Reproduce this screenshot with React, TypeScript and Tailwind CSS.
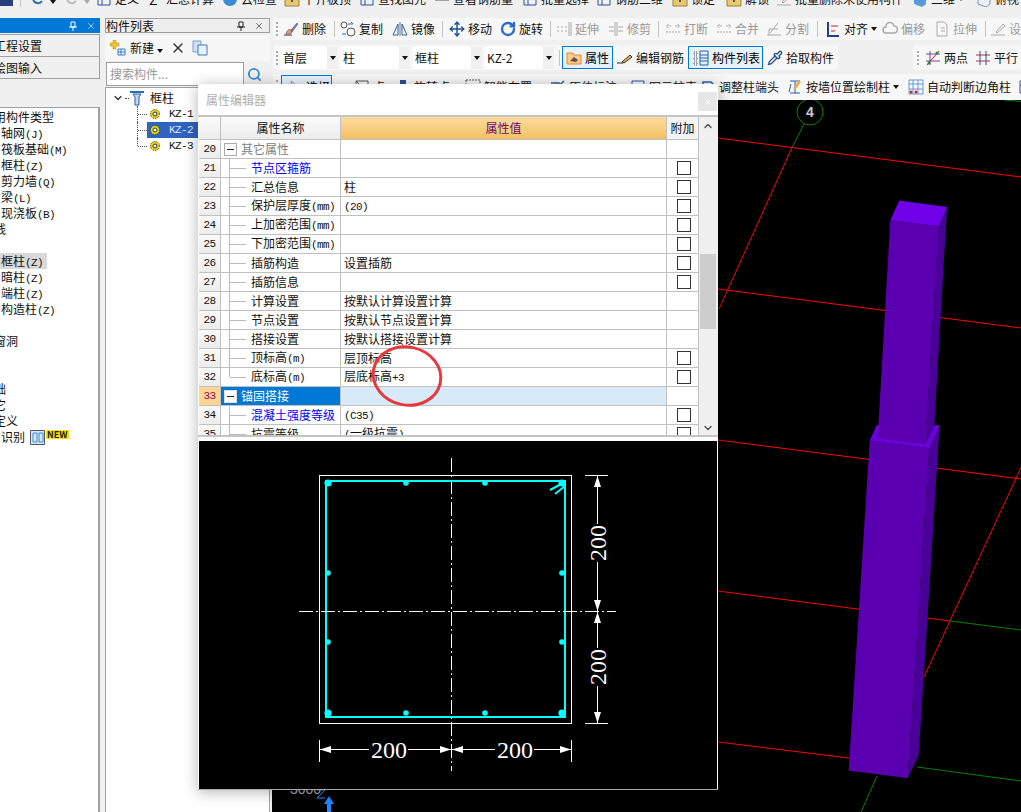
import { ChevronDown, ChevronUp, Move, Pipette, RotateCw, Search, X } from "lucide-react";
import type { ReactNode } from "react";

const Ic = ({ children }: { children: ReactNode }) => (
  <svg viewBox="0 0 16 16" fill="none" className="w-4 h-4 shrink-0">
    {children}
  </svg>
);

// latin text in the app is a 6px wide bitmap face, mono with tighter tracking has the same advance
const Txt = ({ t }: { t: string }) => (
  <>
    {t.split(/([\x20-\x7e]+)/).map((p, i) =>
      i % 2 === 1 ? (
        <span key={i} className="[font-family:'Liberation_Mono',monospace] text-[11px] tracking-[-0.6px]">
          {p}
        </span>
      ) : (
        p
      )
    )}
  </>
);

const Caret = ({ off }: { off?: boolean }) => (
  <span className={"inline-block shrink-0 w-0 h-0 border-x-[3px] border-x-transparent border-t-[4px] " + (off ? "border-t-[#aaa]" : "border-t-[#111]")} />
);

const Grip = () => (
  <div className="flex flex-col gap-[2px] w-[2px] shrink-0">
    <span className="w-[2px] h-[2px] bg-[#aaa]" />
    <span className="w-[2px] h-[2px] bg-[#aaa]" />
    <span className="w-[2px] h-[2px] bg-[#aaa]" />
    <span className="w-[2px] h-[2px] bg-[#aaa]" />
  </div>
);

const Sep = ({ className }: { className: string }) => <span className={"w-px h-[16px] bg-[#c4c4c4] shrink-0 " + className} />;

const Tool = ({ icon, label, w, off, caret }: { icon: ReactNode; label: string; w: string; off?: boolean; caret?: boolean }) => (
  <div className={"flex items-center gap-[3px] shrink-0 whitespace-nowrap " + w + (off ? " text-[#9a9a9a]" : " text-[#111]")}>
    {icon}
    <span>{label}</span>
    {caret && <Caret />}
  </div>
);

// toolbar icons
const Brush = (
  <Ic>
    <path d="M1 14h8" stroke="#333" />
    <path d="M3 13c1-4 3-5 5-4l1 2c-1 2-3 2-6 2z" fill="#e8a05a" stroke="#8a5a9a" />
    <path d="M8 9l6-7 1 1-6 8z" fill="#8a7ac8" stroke="#555" strokeWidth=".6" />
  </Ic>
);
const Rings = (
  <Ic>
    <circle cx="4" cy="4" r="3" stroke="#555" />
    <circle cx="11" cy="11" r="4" stroke="#555" />
    <path d="M8 3h5M13 3l-2-2M6 13H2" stroke="#2b6cb0" />
  </Ic>
);
const Mirror = (
  <Ic>
    <path d="M8 1v14" stroke="#777" />
    <path d="M6 3v11H1zM10 3v11h5z" stroke="#2b5fa8" />
  </Ic>
);
const Extend = (
  <Ic>
    <path d="M1 6h2M5 6h2M9 6h2M1 10h2M5 10h2M9 10h2" stroke="#aaa" />
    <path d="M13 1v14M15 1v14" stroke="#aaa" />
  </Ic>
);
const Trim = (
  <Ic>
    <path d="M1 6h5M1 10h5M10 6h5M10 10h5M7 1v14M9 1v14" stroke="#aaa" />
  </Ic>
);
const Breaker = (
  <Ic>
    <path d="M1 5h5M10 5h5M1 11h14M3 3v4M13 3v4" stroke="#aaa" strokeDasharray="2 1" />
  </Ic>
);
const Split = (
  <Ic>
    <path d="M1 14h14M3 14V8h9M12 2l-8 10" stroke="#aaa" />
  </Ic>
);
const Align = (
  <Ic>
    <path d="M3 1v14h11" stroke="#1f3f8f" strokeWidth="2" />
    <path d="M6 5h7M6 10h4" stroke="#c02020" />
  </Ic>
);
const Cloud = (
  <Ic>
    <path d="M4 12a3 3 0 010-6 4 4 0 018-1 3.500 3.500 0 010 7z" stroke="#aaa" strokeWidth="1.500" />
  </Ic>
);
const Page = (
  <Ic>
    <path d="M3 1h7l3 3v11H3zM7 7h4M7 10h4" stroke="#aaa" />
  </Ic>
);
const Pen = (
  <Ic>
    <path d="M1 14h14" stroke="#aaa" />
    <path d="M6 11l7-8 2 2-8 7z" stroke="#aaa" />
  </Ic>
);
const Prop = (
  <Ic>
    <path d="M1 3h6l1 2h7v9H1z" fill="#fbc98a" stroke="#e58a2a" />
    <path d="M4 11l4-4 4 3-2 2z" fill="#555" />
  </Ic>
);
const EditBar = (
  <Ic>
    <path d="M0 13h6" stroke="#222" />
    <path d="M5 12l8-7 2 2-8 6z" fill="#e9b04a" stroke="#333" />
  </Ic>
);
const ListIc = (
  <Ic>
    <path d="M1 2h3v3H1zM1 7h3v3H1zM1 12h3v3H1z" stroke="#555" strokeDasharray="1 1" />
    <path d="M7 1h8v14H7zM7 5h8M7 8h8M7 11h8" stroke="#2b5fa8" />
  </Ic>
);
const TwoPoint = (
  <Ic>
    <path d="M1 4h14M1 11h14M5 1v14" stroke="#6a4a9a" />
    <path d="M2 15L14 1" stroke="#c02020" />
    <circle cx="4" cy="13" r="1.500" fill="#2a8a2a" />
    <circle cx="12" cy="3" r="1.500" fill="#2a8a2a" />
  </Ic>
);
const Parallel = (
  <Ic>
    <path d="M1 5h14M1 11h14" stroke="#b03040" />
    <path d="M5 1v14M11 1v14" stroke="#2b4fa8" />
  </Ic>
);
const Cols = (
  <Ic>
    <path d="M3 2h10M3 14h10M8 2v12M4 5l-2 8" stroke="#2b5fa8" />
    <path d="M11 1l3 2-5 7-3 1z" fill="#e8b050" />
  </Ic>
);
const GridIc = (
  <Ic>
    <path d="M1 1h14v14H1zM1 5h14M1 10h14M5 1v14M10 1v14" stroke="#6a9ad8" />
    <circle cx="3" cy="13" r="1.500" fill="#d02020" />
    <circle cx="8" cy="13" r="1.500" fill="#d02020" />
  </Ic>
);
const Sheet = (
  <Ic>
    <path d="M2 2h12v12H2zM2 6h12M6 6v8" stroke="#2b4fa8" />
  </Ic>
);
const Lock = (
  <Ic>
    <path d="M1 4h14v11H1z" fill="#e8c870" stroke="#a08030" />
    <path d="M7 8h2v3H7z" fill="#555" />
  </Ic>
);

const TopBar = () => (
  <div className="h-[18px] bg-[#f0f0f0] overflow-hidden shrink-0 flex items-start">
    <div className="flex items-center h-[14px] -mt-[8px]">
      <svg viewBox="0 0 13 14" className="w-[13px] h-[14px] shrink-0">
        <path d="M0 0h13v14H0z" fill="#2b3f7f" />
      </svg>
      <Sep className="ml-[7px] mr-[8px]" />
      <Ic>
        <path d="M4 8a5 5 0 009 2" stroke="#2b6cb0" strokeWidth="2" />
      </Ic>
      <span className="ml-[5px] mr-[7px]"><Caret /></span>
      <Ic>
        <path d="M4 8a5 5 0 009 2" stroke="#bbb" strokeWidth="2" />
      </Ic>
      <span className="ml-[5px] mr-[6px]"><Caret off /></span>
      <Tool w="w-[53px]" icon={Sheet} label="定义" />
      <div className="flex items-center w-[73px] shrink-0 text-[#111]"><span className="text-[14px] w-[17px]">Σ</span><span>汇总计算</span></div>
      <Tool w="w-[62px]" icon={<Ic><circle cx="8" cy="8" r="7" fill="#3a8ad8" /></Ic>} label="云检查" />
      <Tool w="w-[75px]" icon={Lock} label="平齐板顶" />
      <Tool w="w-[75px]" icon={Sheet} label="查找图元" />
      <Tool w="w-[88px]" icon={<Ic><path d="M1 8h14" stroke="#555" strokeWidth="3" /></Ic>} label="查看钢筋量" />
      <Tool w="w-[74px]" icon={Sheet} label="批量选择" />
      <Tool w="w-[76px]" icon={Sheet} label="钢筋三维" />
      <Tool w="w-[54px]" icon={Lock} label="锁定" />
      <Tool w="w-[50px]" icon={Lock} label="解锁" />
      <Tool w="w-[136px]" icon={Pen} label="批量删除未使用构件" />
      <Tool w="w-[64px]" icon={<Ic><path d="M2 4l8-3 4 3v9l-4 3-8-3z" fill="#5a9ad8" /></Ic>} label="三维" caret />
      <Tool w="w-[60px]" icon={<Ic><path d="M2 4l8-3 4 3v9l-4 3-8-3z" stroke="#5a9ad8" /></Ic>} label="俯视" />
    </div>
  </div>
);

const Select = ({ label, w }: { label: string; w: string }) => (
  <div className={"h-[22px] bg-white flex items-center pl-[2px] shrink-0 text-[#111] " + w}>
    <span className="flex-1">{label}</span>
    <span className="w-[11px] h-full bg-[#f0f0f0] flex items-center justify-center"><Caret /></span>
  </div>
);

const Toolbars = () => (
  <div className="h-[82px] shrink-0 flex flex-col ml-px">
    <div className="h-[22px] bg-[#f7f7f7] rounded-sm flex items-center pl-[3px] overflow-hidden">
      <Grip />
      <div className="w-[5px] shrink-0" />
      <Tool w="w-[51px]" icon={Brush} label="删除" />
      <Sep className="mr-[5px]" />
      <Tool w="w-[52px]" icon={Rings} label="复制" />
      <Tool w="w-[50px]" icon={Mirror} label="镜像" />
      <Sep className="mr-[6px]" />
      <Tool w="w-[51px]" icon={<Move className="w-4 h-4 text-[#1f4f8f] shrink-0" strokeWidth={2.2} />} label="移动" />
      <Tool w="w-[50px]" icon={<RotateCw className="w-4 h-4 text-[#2b6cc8] shrink-0" strokeWidth={3.5} />} label="旋转" />
      <Sep className="mr-[5px]" />
      <Tool off w="w-[52px]" icon={Extend} label="延伸" />
      <Tool off w="w-[50px]" icon={Trim} label="修剪" />
      <Sep className="mr-[6px]" />
      <Tool off w="w-[51px]" icon={Breaker} label="打断" />
      <Tool off w="w-[50px]" icon={Breaker} label="合并" />
      <Tool off w="w-[51px]" icon={Split} label="分割" />
      <Sep className="mr-[7px]" />
      <Tool w="w-[57px]" icon={Align} label="对齐" caret />
      <Tool off w="w-[52px]" icon={Cloud} label="偏移" />
      <Tool off w="w-[51px]" icon={Page} label="拉伸" />
      <Sep className="mr-[4px]" />
      <Tool off w="w-[40px]" icon={Pen} label="设置" />
    </div>
    <div className="h-[25px] mt-[5px] flex">
      <div className="w-[565px] shrink-0 bg-[#f7f7f7] rounded-sm flex items-center pl-[3px]">
        <Grip />
        <div className="w-[3px] shrink-0" />
        <div className="flex gap-[3px] shrink-0">
          <Select label="首层" w="w-[57px]" />
          <Select label="柱" w="w-[69px]" />
          <Select label="框柱" w="w-[69px]" />
          <Select label="KZ-2" w="w-[69px]" />
        </div>
        <Sep className="ml-[5px] mr-[2px]" />
        <div className="w-[51px] h-[23px] border border-[#0078d7] bg-[#e5f1fb] flex items-center gap-[3px] pl-[3px] shrink-0">
          {Prop}
          <span>属性</span>
        </div>
        <div className="w-[4px] shrink-0" />
        <Tool w="w-[71px]" icon={EditBar} label="编辑钢筋" />
        <div className="w-[75px] h-[23px] border border-[#0078d7] bg-[#e5f1fb] flex items-center gap-[3px] pl-[4px] shrink-0">
          {ListIc}
          <span className="whitespace-nowrap">构件列表</span>
        </div>
        <div className="w-[4px] shrink-0" />
        <Tool w="w-[68px]" icon={<Pipette className="w-4 h-4 text-[#1f4f8f] shrink-0" />} label="拾取构件" />
      </div>
      <div className="w-[75px] shrink-0" />
      <div className="flex-1 bg-[#f7f7f7] rounded-sm flex items-center pl-[4px] overflow-hidden">
        <Grip />
        <div className="w-[6px] shrink-0" />
        <Tool w="w-[50px]" icon={TwoPoint} label="两点" />
        <Tool w="w-[46px]" icon={Parallel} label="平行" />
      </div>
    </div>
    <div className="h-[26px] mt-[4px] bg-[#f7f7f7] flex items-center pl-[3px] overflow-hidden">
      <Grip />
      <div className="w-[3px] shrink-0" />
      <div className="w-[51px] h-[24px] border border-[#0078d7] bg-[#e5f1fb] flex items-center gap-[3px] pl-[5px] shrink-0">
        <Ic><path d="M4 2l9 7-5 1-2 4z" stroke="#999" /></Ic>
        <span>选择</span>
      </div>
      <div className="w-[22px] shrink-0" />
      <Tool w="w-[41px]" icon={<Ic><path d="M2 2h12v12H2zM2 2l12 12" stroke="#555" /></Ic>} label="点" />
      <Tool w="w-[70px]" icon={<Ic><path d="M5 1h6v8H5zM12 12h2v2h-2z" fill="#2b4f8f" /></Ic>} label="旋转点" />
      <Tool w="w-[85px]" icon={<Ic><path d="M1 1h14v14H1z" stroke="#555" strokeDasharray="2 1" /></Ic>} label="智能布置" />
      <Tool w="w-[80px]" icon={<Ic><path d="M1 14L14 2M1 4h8v10" stroke="#2b5fa8" strokeWidth="1.500" /></Ic>} label="原位标注" />
      <Tool w="w-[70px]" icon={Sheet} label="图元柱表" />
      <Tool w="w-[87px]" icon={<Ic><path d="M3 14V3h8l3 3-2 2" stroke="#2b5fa8" strokeWidth="1.500" /></Ic>} label="调整柱端头" />
      <Tool w="w-[121px]" icon={Cols} label="按墙位置绘制柱" caret />
      <Tool w="w-[110px]" icon={GridIc} label="自动判断边角柱" />
      {Sheet}
    </div>
  </div>
);

const PanelClose = ({ dark }: { dark?: boolean }) => (
  <div className={"flex items-center gap-[8px] " + (dark ? "text-[#222]" : "text-white")}>
    <svg viewBox="0 0 10 10" className="w-[10px] h-[10px]" fill="none" stroke="currentColor">
      <path d="M3 1h4v5H3zM1 6h8M5 6v4" />
    </svg>
    <X className="w-[10px] h-[10px]" strokeWidth={1.5} />
  </div>
);

const leftRows: { t: string; ml?: string; on?: boolean; badge?: boolean }[] = [
  { t: "常用构件类型", ml: "-ml-[19px]" },
  { t: "轴网(J)" },
  { t: "筏板基础(M)" },
  { t: "框柱(Z)" },
  { t: "剪力墙(Q)" },
  { t: "梁(L)" },
  { t: "现浇板(B)" },
  { t: "线", ml: "-ml-[7px]" },
  { t: "" },
  { t: "框柱(Z)", on: true },
  { t: "暗柱(Z)" },
  { t: "端柱(Z)" },
  { t: "构造柱(Z)" },
  { t: "" },
  { t: "窗洞", ml: "-ml-[7px]" },
  { t: "" },
  { t: "" },
  { t: "基础", ml: "-ml-[19px]" },
  { t: "其它", ml: "-ml-[19px]" },
  { t: "定义", ml: "-ml-[7px]" },
  { t: "识别", badge: true },
];

const LeftPanel = () => (
  <aside className="w-[100px] shrink-0 flex flex-col overflow-hidden">
    <div className="h-[15px] bg-[#0078d7] flex items-center justify-end pr-[4px] shrink-0">
      <PanelClose />
    </div>
    <div className="h-[23px] mt-px border border-l-0 border-[#a0a0a0] bg-[#f0f0f0] flex items-center -indent-[6px] text-[#111] overflow-hidden shrink-0">工程设置</div>
    <div className="h-[22px] border border-t-0 border-l-0 border-[#a0a0a0] bg-[#f0f0f0] flex items-center -indent-[6px] text-[#111] overflow-hidden shrink-0">绘图输入</div>
    <div className="h-[28px] shrink-0" />
    <div className="flex-1 bg-white border-t border-r-2 border-[#a0a0a8] pt-px overflow-hidden">
      {leftRows.map((r, i) => (
        <div key={i} className="h-4 flex items-center whitespace-nowrap text-[#111]">
          <span className={"h-4 leading-4 pl-px pr-[4px] " + (r.ml ?? "") + (r.on ? " bg-[#d9d9d9]" : "")}>
            <Txt t={r.t} />
          </span>
          {r.badge && (
            <span className="flex items-start ml-px">
              <svg viewBox="0 0 15 15" className="w-[15px] h-[15px]" fill="none">
                <path d="M.5.500h14v14H.5z" stroke="#556" fill="#d8e8f8" />
                <path d="M3 3h4v9H3zM9 3h4v9H9z" stroke="#3a8ad8" />
              </svg>
              <span className="ml-px text-[9px] leading-[9px] font-bold bg-[#ffe000] px-px text-[#222]">NEW</span>
            </span>
          )}
        </div>
      ))}
    </div>
  </aside>
);

const Gear = () => (
  <svg viewBox="0 0 10 10" className="w-[10px] h-[10px] shrink-0">
    <circle cx="5" cy="5" r="4.500" fill="#e8d800" stroke="#333" strokeDasharray="1 1" />
    <circle cx="5" cy="5" r="2" fill="#fff" stroke="#333" />
  </svg>
);

const MidPanel = () => (
  <aside className="w-[165px] ml-[5px] shrink-0 flex flex-col">
    <div className="h-[15px] border border-[#a0a0a0] bg-[#eee] flex items-center justify-between pr-[5px] text-[#111] shrink-0">
      <span>构件列表</span>
      <PanelClose dark />
    </div>
    <div className="h-[26px] mt-[2px] bg-[#f7f7f7] flex items-center pl-[5px] text-[#111] shrink-0">
      <svg viewBox="0 0 16 16" className="w-4 h-4" fill="none">
        <path d="M3 0h3v3h3v3H6v3H3V6H0V3h3z" fill="#f2c230" stroke="#b08a10" strokeWidth=".5" />
        <path d="M8 9h7v6H8zM8 12h7M11 9v6" stroke="#3a7ac8" />
      </svg>
      <span className="ml-[4px]">新建</span>
      <span className="ml-[3px] mr-[7px]"><Caret /></span>
      <X className="w-[16px] h-[16px] text-[#333]" strokeWidth={2} />
      <svg viewBox="0 0 16 16" className="w-4 h-4 ml-[6px]" fill="none">
        <path d="M1 1h8v11H1z" fill="#cfe0f5" stroke="#7aa0d0" />
        <path d="M6 5h9v10H6z" fill="#eaf2fc" stroke="#3a7ac8" />
      </svg>
    </div>
    <div className="h-[25px] mt-px flex shrink-0">
      <div className="w-[138px] ml-px h-[24px] border border-[#a0a0a0] bg-white text-[#999] flex items-center pl-[3px]">搜索构件...</div>
      <div className="flex-1 flex items-center justify-center pr-[5px]">
        <Search className="w-[15px] h-[15px] text-[#3a8ad8]" strokeWidth={3} />
      </div>
    </div>
    <div className="flex-1 bg-white border border-b-0 border-[#a0a0a0] pt-[2px] text-[#111]">
      <div className="h-4 flex items-center pl-[6px]">
        <ChevronDown className="w-[12px] h-[12px] text-[#333]" strokeWidth={2.5} />
        <span className="w-[4px] border-t border-dotted border-[#555] mx-px" />
        <svg viewBox="0 0 14 16" className="w-[14px] h-4" fill="none">
          <path d="M0 1h14v2H0z" fill="#2b6cb0" />
          <path d="M3 4h8L9 7v8H5V7z" fill="#bcd8f2" stroke="#2b5fa8" />
        </svg>
        <span className="ml-[6px]">框柱</span>
      </div>
      {["KZ-1", "KZ-2", "KZ-3"].map((k, i) => (
        <div key={k} className="h-4 flex items-center pl-[31px] relative">
          <span className={"absolute left-[31px] top-0 border-l border-dotted border-[#555] " + (i === 2 ? "h-[8px]" : "h-4")} />
          <span className="w-[9px] ml-px border-t border-dotted border-[#555]" />
          <span className={"flex items-center w-[52px] h-4 pl-[3px] gap-[9px] [font-family:'Liberation_Mono',monospace] text-[11px] tracking-[-0.6px] " + (i === 1 ? "bg-[#2f63bf] text-[#dce8ff]" : "")}>
            <Gear />
            {k}
          </span>
        </div>
      ))}
    </div>
  </aside>
);

const Canvas3D = () => (
  <div className="flex-1 bg-black min-h-0">
    <svg viewBox="272 100 749 712" className="w-[749px] h-[712px] block" fill="none">
      <path d="M718 138L1021 177M718 289L1021 328M718 440L1021 479M718 591L950 621M718 742L849 758" stroke="#ff0000" />
      <path d="M950 621L1021 630M917 767L1021 781M1004 100L1021 101.500" stroke="#008000" />
      <path d="M792 147.500L719 309M1021 467.500L924 677" stroke="#ff0000" />
      <path d="M810 112L792 147.500M877 776L861 812" stroke="#008000" />
      <circle cx="810" cy="112" r="13" stroke="#008000" fill="#000" />
      <text x="810" y="117" textAnchor="middle" fill="#ccc" fontSize="14" fontWeight="bold" fontFamily="Liberation Sans, sans-serif">4</text>

      {/* lower shaft */}
      <polygon points="929.300,448.200 939.700,425.200 918.700,755 907.700,778.300" fill="#4a0098" />
      <polygon points="869.700,440.800 929.300,448.200 907.700,778.300 848.700,770.500" fill="#5a00b0" />
      <polygon points="869.700,440.800 876.800,425 939.700,425.200 929.300,448.200" fill="#6c00dc" />
      {/* upper shaft */}
      <polygon points="938.700,226.300 947,207 934.300,426 925.300,444.500" fill="#4a0098" />
      <polygon points="890.300,220.300 938.700,226.300 925.300,444.500 877.700,438.500" fill="#5a00b0" />
      <polygon points="890.300,220.300 899.300,200.500 947,207 938.700,226.300" fill="#7000e8" />

      <text x="290" y="794" fill="#aaa" fontSize="14" fontFamily="Liberation Sans, sans-serif">3000</text>
      <path d="M317 790h8l-8 8h8" stroke="#1e88ff" />
      <path d="M329 796l5 8h-3v8h-4v-8h-3z" fill="#1e88ff" />
    </svg>
  </div>
);

type Row = { n: number; name: string; val?: string; box?: boolean; kind?: "group" | "blue" | "sel"; last?: boolean };

const rows: Row[] = [
  { n: 20, name: "其它属性", kind: "group" },
  { n: 21, name: "节点区箍筋", kind: "blue", box: true },
  { n: 22, name: "汇总信息", val: "柱", box: true },
  { n: 23, name: "保护层厚度(mm)", val: "(20)", box: true },
  { n: 24, name: "上加密范围(mm)", box: true },
  { n: 25, name: "下加密范围(mm)", box: true },
  { n: 26, name: "插筋构造", val: "设置插筋", box: true },
  { n: 27, name: "插筋信息", box: true },
  { n: 28, name: "计算设置", val: "按默认计算设置计算" },
  { n: 29, name: "节点设置", val: "按默认节点设置计算" },
  { n: 30, name: "搭接设置", val: "按默认搭接设置计算" },
  { n: 31, name: "顶标高(m)", val: "层顶标高", box: true },
  { n: 32, name: "底标高(m)", val: "层底标高+3", box: true, last: true },
  { n: 33, name: "锚固搭接", kind: "sel" },
  { n: 34, name: "混凝土强度等级", val: "(C35)", kind: "blue", box: true },
  { n: 35, name: "抗震等级", val: "(一级抗震)", box: true },
];

const Minus = ({ white }: { white?: boolean }) => (
  <span className={"w-[13px] h-[13px] border flex items-center justify-center bg-white shrink-0 " + (white ? "border-[#ddd]" : "border-[#aaa]")}>
    <span className="w-[7px] h-px bg-[#222]" />
  </span>
);

const PropRow = ({ r }: { r: Row }) => {
  const sel = r.kind === "sel";
  const head = sel || r.kind === "group";
  return (
    <div className="grid grid-cols-[22px_120px_326px_31px] h-[19px] border-b border-[#c0c0c0] shrink-0">
      <div className={"flex items-center justify-center border-r border-[#c0c0c0] [font-family:'Liberation_Mono',monospace] text-[11px] tracking-[-0.6px] " + (sel ? "bg-[#ffd595] text-[#8a0a5a]" : "bg-gradient-to-b from-[#fafafa] to-[#ececec] text-[#111]")}>{r.n}</div>
      <div className={"relative flex items-center border-r border-[#c0c0c0] whitespace-nowrap " + (sel ? "bg-[#0078d7] text-white" : r.kind === "blue" ? "text-[#0000ee]" : r.kind === "group" ? "text-[#808080]" : "text-[#111]")}>
        {head ? (
          <span className="flex items-center pl-[3px] gap-[4px]">
            <Minus white={sel} />
            {r.name}
          </span>
        ) : (
          <span className="flex items-center pl-[9px]">
            <span className={"absolute left-[8px] top-0 w-px bg-[#bbb] " + (r.last ? "h-[9px]" : "h-[19px]")} />
            <span className="w-[16px] h-px bg-[#bbb] mr-[5px]" />
            <span><Txt t={r.name} /></span>
          </span>
        )}
      </div>
      <div className={"flex items-center pl-[3px] border-r border-[#c0c0c0] text-[#111] " + (sel ? "bg-[#d8e9f8]" : "")}>
        <span>{r.val && <Txt t={r.val} />}</span>
      </div>
      <div className="flex items-center justify-center bg-white pl-[2px]">
        {r.box && <span className="w-[14px] h-[14px] border border-[#333]" />}
      </div>
    </div>
  );
};

const dots = [
  [328, 483], [406, 483], [485, 483], [562, 483],
  [328, 573], [562, 573], [328, 642], [562, 642],
  [328, 713], [406, 713], [485, 713], [562, 713],
];

const Preview = () => (
  <svg viewBox="199 441 518 348" className="w-[518px] h-[348px] block bg-black" fill="none">
    <rect x="319.500" y="475.500" width="252" height="248" stroke="#fff" />
    <rect x="326" y="481" width="239" height="236" stroke="#00ffff" strokeWidth="2" />
    <path d="M451.500 458V771" stroke="#fff" strokeDasharray="14 3 2 3" />
    <path d="M299 611.500H616" stroke="#fff" strokeDasharray="14 3 2 3" />
    {dots.map(([x, y], i) => (
      <circle key={x + "-" + y} cx={x} cy={y} r={i === 0 || i === 3 || i === 8 || i === 11 ? 3.6 : 2.8} fill="#00ffff" />
    ))}
    <path d="M563 483l-13 7M565 486l-10 8" stroke="#00ffff" strokeWidth="2" />
    {/* right dimensions */}
    <path d="M585 475.500H608M585 723.500H608" stroke="#fff" />
    <path d="M597.500 476V524M597.500 562V611M597.500 612V648M597.500 686V723" stroke="#fff" />
    <path d="M597.500 476l-3.500 11h7zM597.500 611l-3.500-11h7zM597.500 612l-3.500 11h7zM597.500 723l-3.500-11h7z" fill="#fff" />
    <text transform="translate(606 543) rotate(-90)" textAnchor="middle" fill="#fff" fontSize="24" fontFamily="Liberation Serif, serif">200</text>
    <text transform="translate(606 667) rotate(-90)" textAnchor="middle" fill="#fff" fontSize="24" fontFamily="Liberation Serif, serif">200</text>
    {/* bottom dimensions */}
    <path d="M319.500 740V762M571.500 740V762" stroke="#fff" />
    <path d="M320 749.500H369M408 749.500H451M452 749.500H495M534 749.500H571" stroke="#fff" />
    <path d="M320 749.500l11-3.500v7zM451 749.500l-11-3.500v7zM452 749.500l11-3.500v7zM571 749.500l-11-3.500v7z" fill="#fff" />
    <text x="389" y="758" textAnchor="middle" fill="#fff" fontSize="24" fontFamily="Liberation Serif, serif">200</text>
    <text x="515" y="758" textAnchor="middle" fill="#fff" fontSize="24" fontFamily="Liberation Serif, serif">200</text>
  </svg>
);

const PropDialog = () => (
  <div className="absolute left-[198px] top-[84px] w-[520px] h-[706px] bg-white shadow-[0_2px_14px_rgba(0,0,0,0.3)] border-b border-[#aaa] flex flex-col">
    <div className="h-[31px] shrink-0 flex items-start justify-between pl-[8px] pr-px pt-[8px]">
      <span className="text-[#b0b0b0] leading-4">属性编辑器</span>
      <span className="w-[19px] h-[19px] bg-[#e6e6e6] flex items-center justify-center">
        <X className="w-[8px] h-[8px] text-white" strokeWidth={3} />
      </span>
    </div>
    <div className="h-[322px] shrink-0 border-y-2 border-[#c4c4c4] flex pl-px overflow-hidden relative">
      <div className="w-[499px] shrink-0 flex flex-col overflow-hidden">
        <div className="grid grid-cols-[22px_120px_326px_31px] h-[23px] border-b border-[#c0c0c0] shrink-0">
          <div className="bg-gradient-to-b from-[#fafafa] to-[#ececec] border-r border-[#c0c0c0]" />
          <div className="bg-gradient-to-b from-[#fafafa] to-[#ececec] border-r border-[#c0c0c0] flex items-center justify-center text-[#111]">属性名称</div>
          <div className="bg-gradient-to-b from-[#fbdc9e] to-[#f3c060] border-r border-[#c0c0c0] flex items-center justify-center text-[#6a0a7a]">属性值</div>
          <div className="bg-[#f4f4f4] flex items-center justify-center text-[#111]">附加</div>
        </div>
        {rows.map((r) => (
          <PropRow key={r.n} r={r} />
        ))}
      </div>
      <div className="w-[20px] shrink-0 bg-[#f0f0f0] border-l border-[#c0c0c0] flex flex-col items-center pl-px pr-[2px]">
        <ChevronUp className="w-[12px] h-[12px] mt-[3px] text-[#555] shrink-0" strokeWidth={3} />
        <div className="w-full h-[75px] mt-[122px] bg-[#cdcdcd] shrink-0" />
        <ChevronDown className="w-[12px] h-[12px] mt-[93px] text-[#555] shrink-0" strokeWidth={3} />
      </div>
      {/* hand-drawn mark over the table */}
      <svg viewBox="0 0 76 70" className="absolute left-[171px] top-[224px] w-[76px] h-[70px]" fill="none">
        <ellipse cx="38" cy="35" rx="34" ry="29" stroke="#e8383d" strokeWidth="3" transform="rotate(12 38 35)" />
      </svg>
    </div>
    <div className="mt-[4px] flex-1 pl-px">
      <Preview />
    </div>
  </div>
);

export default function App() {
  return (
    <div className="relative w-[1021px] h-[812px] overflow-hidden bg-[#f0f0f0] text-[12px] leading-none [font-family:'Noto_Sans_CJK_SC','Noto_Sans',sans-serif]">
      <TopBar />
      <div className="flex h-[794px]">
        <LeftPanel />
        <MidPanel />
        <main className="flex-1 ml-[2px] min-w-0 flex flex-col overflow-hidden">
          <Toolbars />
          <Canvas3D />
        </main>
      </div>
      <PropDialog />
    </div>
  );
}
